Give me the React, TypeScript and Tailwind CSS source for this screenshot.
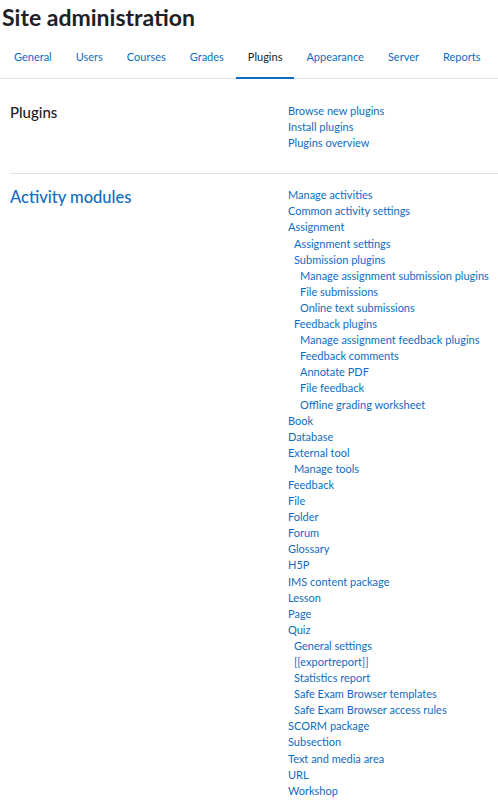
const tabs = ["General", "Users", "Courses", "Grades", "Plugins", "Appearance", "Server", "Reports"];

type Item = { label: string; level: number };

const pluginLinks: Item[] = [
  { label: "Browse new plugins", level: 0 },
  { label: "Install plugins", level: 0 },
  { label: "Plugins overview", level: 0 },
];

const activityLinks: Item[] = [
  { label: "Manage activities", level: 0 },
  { label: "Common activity settings", level: 0 },
  { label: "Assignment", level: 0 },
  { label: "Assignment settings", level: 1 },
  { label: "Submission plugins", level: 1 },
  { label: "Manage assignment submission plugins", level: 2 },
  { label: "File submissions", level: 2 },
  { label: "Online text submissions", level: 2 },
  { label: "Feedback plugins", level: 1 },
  { label: "Manage assignment feedback plugins", level: 2 },
  { label: "Feedback comments", level: 2 },
  { label: "Annotate PDF", level: 2 },
  { label: "File feedback", level: 2 },
  { label: "Offline grading worksheet", level: 2 },
  { label: "Book", level: 0 },
  { label: "Database", level: 0 },
  { label: "External tool", level: 0 },
  { label: "Manage tools", level: 1 },
  { label: "Feedback", level: 0 },
  { label: "File", level: 0 },
  { label: "Folder", level: 0 },
  { label: "Forum", level: 0 },
  { label: "Glossary", level: 0 },
  { label: "H5P", level: 0 },
  { label: "IMS content package", level: 0 },
  { label: "Lesson", level: 0 },
  { label: "Page", level: 0 },
  { label: "Quiz", level: 0 },
  { label: "General settings", level: 1 },
  { label: "[[exportreport]]", level: 1 },
  { label: "Statistics report", level: 1 },
  { label: "Safe Exam Browser templates", level: 1 },
  { label: "Safe Exam Browser access rules", level: 1 },
  { label: "SCORM package", level: 0 },
  { label: "Subsection", level: 0 },
  { label: "Text and media area", level: 0 },
  { label: "URL", level: 0 },
  { label: "Workshop", level: 0 },
];

function LinkList({ items }: { items: Item[] }) {
  return (
    <ul className="flex flex-col text-[11px] leading-[16.1px]">
      {items.map((it) => (
        <li
          key={it.label}
          className={
            it.level === 0 ? "pl-0" : it.level === 1 ? "pl-[6px]" : "pl-[12px]"
          }
        >
          <a className="text-[#0f6cbf] whitespace-nowrap">{it.label}</a>
        </li>
      ))}
    </ul>
  );
}

export default function App() {
  return (
    <div className="w-[498px] min-h-[800px] bg-white font-['Lato','Liberation_Sans',sans-serif] text-[#1d2125] overflow-hidden">
      <h1 className="pl-[2px] text-[23px] font-bold leading-[34px]">Site administration</h1>
      <nav className="mt-[5px] flex pl-[2px] border-b border-[#dee2e6] text-[11px] leading-[16px]">
        {tabs.map((t) => (
          <a
            key={t}
            className={
              t === "Plugins"
                ? "px-[12px] pt-[10px] pb-[12px] text-[#1d2125] border-b-2 border-[#0f6cbf] -mb-px"
                : "px-[12px] pt-[10px] pb-[12px] text-[#0f6cbf]"
            }
          >
            {t}
          </a>
        ))}
      </nav>
      <section className="ml-[10px] grid grid-cols-[278px_1fr] pt-[24px] pb-[22px] border-b border-[#dee2e6]">
        <h2 className="-mt-px text-[15px] leading-[20px] font-medium">Plugins</h2>
        <LinkList items={pluginLinks} />
      </section>
      <section className="ml-[10px] grid grid-cols-[278px_1fr] pt-[13px] pb-[20px]">
        <h2 className="text-[16.5px] leading-[20px] font-medium text-[#0f6cbf]">Activity modules</h2>
        <LinkList items={activityLinks} />
      </section>
    </div>
  );
}
